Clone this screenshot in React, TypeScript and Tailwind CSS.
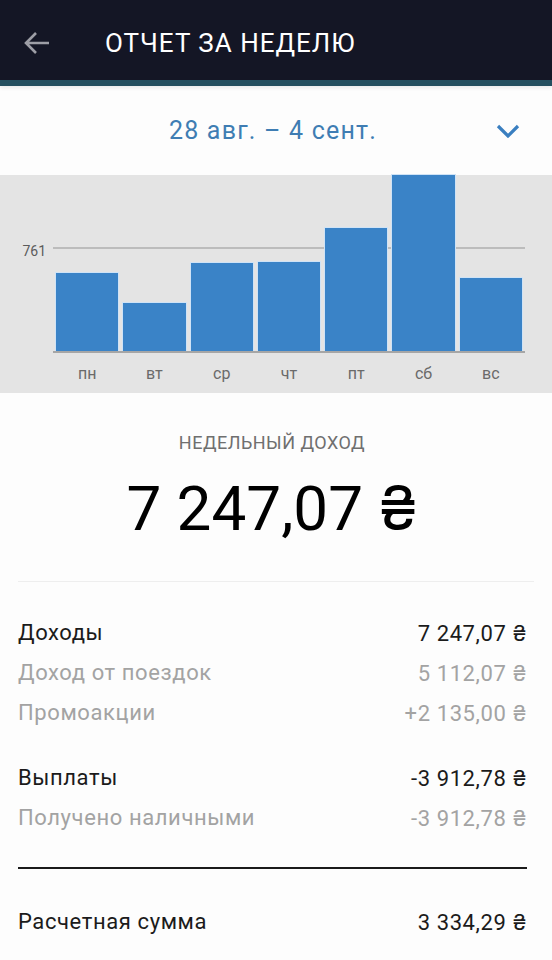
const days = [
  { label: "пн", h: 79 },
  { label: "вт", h: 49 },
  { label: "ср", h: 89 },
  { label: "чт", h: 90 },
  { label: "пт", h: 124 },
  { label: "сб", h: 177 },
  { label: "вс", h: 74 },
];

const rows = [
  { group: [
    { name: "Доходы", value: "7 247,07", main: true },
    { name: "Доход от поездок", value: "5 112,07" },
    { name: "Промоакции", value: "+2 135,00" },
  ] },
  { group: [
    { name: "Выплаты", value: "-3 912,78", main: true },
    { name: "Получено наличными", value: "-3 912,78" },
  ] },
];

// hryvnia sign from Inter, it's upright like the original
const Uah = () => <span style={{ fontFamily: "Inter, sans-serif" }}>₴</span>;

const Row = ({ name, value, main }: { name: string; value: string; main?: boolean }) => (
  <div
    className={`flex justify-between h-[40px] leading-[40px] text-[22px] tracking-[0.6px] ${
      main ? "text-[#1b1b1b]" : "text-[#a3a3a3]"
    }`}
  >
    <span>{name}</span>
    <span>
      {value} <Uah />
    </span>
  </div>
);

const App = () => {
  return (
    <main
      className="w-[552px] h-[960px] overflow-hidden bg-[#fdfdfd]"
      style={{ fontFamily: "Roboto, 'Noto Sans', sans-serif" }}
    >
      {/* header */}
      <header className="relative z-10 h-[86px] bg-[#141625] border-b-[6px] border-[#244f5f] flex items-center shadow-[0_2px_4px_rgba(0,0,0,0.08)]">
        <svg width="28" height="24" viewBox="0 0 28 24" className="ml-[23px] mt-[6px]">
          <path d="M26 12H3M13 2L3 12l10 10" fill="none" stroke="#9d9ea6" strokeWidth="2.6" />
        </svg>
        <h1 className="ml-[54px] mt-[6px] text-[26px] text-white tracking-[1px]">ОТЧЕТ ЗА НЕДЕЛЮ</h1>
      </header>

      {/* date picker */}
      <div className="h-[89px] flex items-center relative">
        <span className="flex-1 text-center text-[25px] tracking-[1.2px] text-[#3f7db3] pr-[6px]">
          28 авг. – 4 сент.
        </span>
        <svg width="24" height="14" viewBox="0 0 24 14" className="absolute right-[32px] top-[38px]">
          <path d="M2 2l10 10L22 2" fill="none" stroke="#3a7fc0" strokeWidth="3.2" />
        </svg>
      </div>

      {/* chart */}
      <section className="h-[218px] bg-[#e4e4e4] flex">
        <div className="w-[53px] relative">
          <span className="absolute right-[7px] top-[66px] text-[14px] text-[#5b5b5b]">761</span>
        </div>
        <div className="w-[472px] flex flex-col">
          <div className="relative h-[178px] border-b-2 border-[#a6a6a6] flex items-end gap-[3px] px-[2px]">
            <div className="absolute left-0 right-0 bottom-[102px] h-[2px] bg-[#bcbcbc]" />
            {days.map((d) => (
              <div
                key={d.label}
                className="relative flex-1 bg-[#3a83c7] border border-b-0 border-[#cfe3f6]"
                style={{ height: d.h }}
              />
            ))}
          </div>
          <div className="flex px-[2px] gap-[3px] mt-[9px]">
            {days.map((d) => (
              <span key={d.label} className="flex-1 text-center text-[16px] text-[#6a6a6a]">
                {d.label}
              </span>
            ))}
          </div>
        </div>
      </section>

      {/* weekly total */}
      <div className="flex flex-col items-center">
        <p className="mt-[39px] h-[22px] leading-[22px] text-[18px] tracking-[0.5px] text-[#6f6f6f] pr-[8px]">
          НЕДЕЛЬНЫЙ ДОХОД
        </p>
        <p className="mt-[23px] h-[62px] leading-[62px] text-[62px] text-black pr-[8px]">
          7 247,07 <Uah />
        </p>
      </div>

      <div className="mx-[18px] mt-[42px] h-px bg-[#eeeeee]" />

      <div className="px-[18px] pr-[25px]">
        <div className="mt-[31px]">
          {rows[0].group.map((r) => (
            <Row key={r.name} {...r} />
          ))}
        </div>
        <div className="mt-[25px]">
          {rows[1].group.map((r) => (
            <Row key={r.name} {...r} />
          ))}
        </div>
        <div className="mt-[29px] h-[2px] bg-[#1b1b1b]" />
        <div className="mt-[33px]">
          <Row name="Расчетная сумма" value="3 334,29" main />
        </div>
      </div>
    </main>
  );
};

export default App;
